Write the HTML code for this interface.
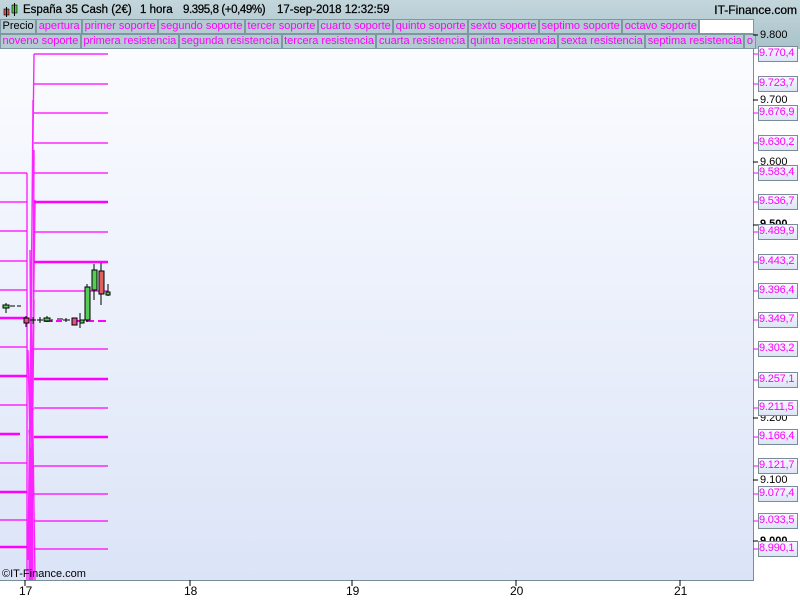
<!DOCTYPE html>
<html><head><meta charset="utf-8"><style>
*{margin:0;padding:0;box-sizing:border-box}
body{width:800px;height:600px;overflow:hidden;background:#fff;font-family:"Liberation Sans",sans-serif;position:relative}
#hdr{position:absolute;left:0;top:0;width:800px;height:49px;background:linear-gradient(#c3d6dc,#a9c2ca)}
.t{position:absolute;top:4px;font-size:11.5px;color:#000;white-space:pre;-webkit-text-stroke:.25px #000}
#brand{position:absolute;right:3px;top:3px;font-size:12px;-webkit-text-stroke:.25px #000}
.row{position:absolute;left:0;height:15px;display:flex;font-size:11px;line-height:13px}
.row span{border:1px solid #7d98a2;background:#b4cbd2;color:#f0f;padding:0 1.5px;white-space:nowrap}
#chart{position:absolute;left:0;top:49px;width:754px;height:532px;background:linear-gradient(#fbfcff,#dbe4f7);border-right:1px solid #7a8c98;border-bottom:1px solid #7a8c98}
.lbl{position:absolute;left:758px;width:40px;height:16px;border:1px solid #7a8c98;background:linear-gradient(#f6f8fd,#dce4f5);color:#f0f;font-size:11px;line-height:13px;padding-left:0;letter-spacing:-0.2px;overflow:hidden}
.ax{position:absolute;left:760px;font-size:11px;color:#000}
.xl{position:absolute;top:584px;font-size:12px}
</style></head><body>
<div id="hdr"></div>
<svg style="position:absolute;left:3px;top:3px" width="16" height="14"><rect x="1" y="6" width="5" height="6" fill="#e05050" stroke="#000" stroke-width=".6"/><line x1="3.5" y1="4" x2="3.5" y2="14" stroke="#000"/><rect x="9" y="2" width="5" height="8" fill="#40d040" stroke="#000" stroke-width=".6"/><line x1="11.5" y1="0" x2="11.5" y2="13" stroke="#000"/></svg>
<div class="t" style="left:23px">España 35 Cash (2€)</div>
<div class="t" style="left:140px">1 hora</div>
<div class="t" style="left:183px;letter-spacing:-0.4px">9.395,8 (+0,49%)</div>
<div class="t" style="left:277px">17-sep-2018 12:32:59</div>
<div id="brand">IT-Finance.com</div>
<div class="row" style="top:19px"><span style="color:#000">Precio</span><span>apertura</span><span>primer soporte</span><span>segundo soporte</span><span>tercer soporte</span><span>cuarto soporte</span><span>quinto soporte</span><span>sexto soporte</span><span>septimo soporte</span><span>octavo soporte</span><span style="background:#fff;width:55px"></span></div>
<div class="row" style="top:34px"><span>noveno soporte</span><span>primera resistencia</span><span>segunda resistencia</span><span>tercera resistencia</span><span>cuarta resistencia</span><span>quinta resistencia</span><span>sexta resistencia</span><span>septima resistencia</span><span>o</span></div>
<div id="chart"></div>
<svg style="position:absolute;left:0;top:0" width="800" height="600">
<g stroke="#f0f" stroke-width="1.2" fill="none">
<path d="M34 54H108M34 84H108M34 113H108M34 143H108M34 173H108M34 202H108M34 232H108M34 262H108M34 291H108M34 349H108M34 379H108M34 408H108M34 437H108M34 466H108M34 494H108M34 521H108M34 549H108"/>
<path d="M34 202H108M34 379H108M34 437H108M34 262H108" stroke-width="2.5"/>
<path d="M0 173H27M0 202H27M0 231H27M0 261H27M0 290H27M0 318H27M0 347H27M0 376H27M0 405H27M0 434H20M0 463H27M0 492H27M0 520H27M0 547H27"/>
<path d="M0 318H27M0 376H27M0 492H27M0 547H27M0 434H20" stroke-width="2.5"/>
<path d="M27 173V580M28 560L34 54M29 580L33 100M30 580L35 200M31 580L34 300M29 430L34 500M28 350L33 580M31 300L35 580M32 580L34 150M30 250L33 580" stroke-width="1.4" opacity=".85"/>
<path d="M44 321H62M74 321H108" stroke-width="2" stroke-dasharray="8 4"/>
</g>
<g stroke="#000" stroke-width="1">
<path d="M6 303V313M4 307H8M10 306H15M17 306H21M26 316V327M33 317V324M30 320H36M40 317V323M37 320H43M47 316V322M52 319V322M57 319H63M66 318V322M63 320H70M80 313V328M87 284V322M94 264V300M101 263V305M108 284V296"/>
<rect x="3" y="305" width="6" height="3" fill="#5c5"/><rect x="24" y="318" width="5" height="5" fill="#e0508a"/><rect x="44" y="318" width="6" height="3" fill="#5c5"/><rect x="72" y="318" width="5" height="7" fill="#e0508a"/><rect x="80" y="320" width="4" height="3" fill="#5c5"/><rect x="85" y="287" width="5" height="33" fill="#5c5"/><rect x="92" y="270" width="5" height="20" fill="#5c5"/><rect x="99" y="271" width="5" height="23" fill="#e06060"/><rect x="106" y="292" width="4" height="3" fill="#5c5"/>
</g>
<g stroke="#000"><path d="M753 35H758M753 100H758M753 162H758M753 225H758M753 418H758M753 480H758M753 541H758M25 580V586M190 580V586M352 580V586M516 580V586M680 580V586"/></g>
<g stroke="#f0f"><path d="M753 54H758M753 84H758M753 113H758M753 143H758M753 173H758M753 202H758M753 232H758M753 262H758M753 291H758M753 320H758M753 349H758M753 380H758M753 408H758M753 437H758M753 466H758M753 494H758M753 521H758M753 549H758"/></g>
</svg>
<div class="ax" style="top:29px">9.800</div><div class="ax" style="top:94px">9.700</div><div class="ax" style="top:156px">9.600</div><div class="ax" style="top:218px;font-weight:bold">9.500</div><div class="ax" style="top:412px">9.200</div><div class="ax" style="top:474px">9.100</div><div class="ax" style="top:535px;font-weight:bold">9.000</div>
<div class="lbl" style="top:46px">9.770,4</div><div class="lbl" style="top:76px">9.723,7</div><div class="lbl" style="top:105px">9.676,9</div><div class="lbl" style="top:135px">9.630,2</div><div class="lbl" style="top:165px">9.583,4</div><div class="lbl" style="top:194px">9.536,7</div><div class="lbl" style="top:224px">9.489,9</div><div class="lbl" style="top:254px">9.443,2</div><div class="lbl" style="top:283px">9.396,4</div><div class="lbl" style="top:312px">9.349,7</div><div class="lbl" style="top:341px">9.303,2</div><div class="lbl" style="top:372px">9.257,1</div><div class="lbl" style="top:400px">9.211,5</div><div class="lbl" style="top:429px">9.166,4</div><div class="lbl" style="top:458px">9.121,7</div><div class="lbl" style="top:486px">9.077,4</div><div class="lbl" style="top:513px">9.033,5</div><div class="lbl" style="top:541px">8.990,1</div>
<div style="position:absolute;left:2px;top:568px;font-size:11px">©IT-Finance.com</div>
<div class="xl" style="left:19px">17</div><div class="xl" style="left:184px">18</div><div class="xl" style="left:346px">19</div><div class="xl" style="left:510px">20</div><div class="xl" style="left:674px">21</div>
</body></html>
